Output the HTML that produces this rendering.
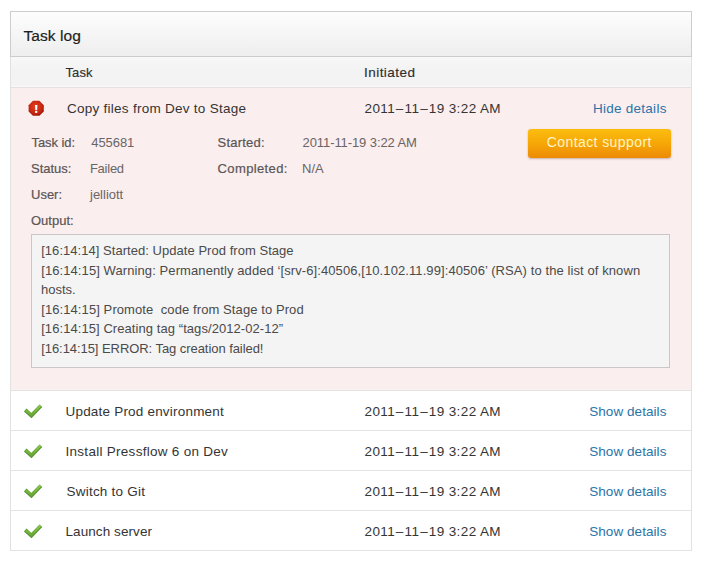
<!DOCTYPE html>
<html><head><meta charset="utf-8">
<style>
html,body{margin:0;padding:0;background:#fff;width:707px;height:571px;overflow:hidden;}
body{font-family:"Liberation Sans",sans-serif;position:relative;}
.a{position:absolute;white-space:nowrap;line-height:16px;}
#box{position:absolute;left:10px;top:11px;width:680px;height:538px;border:1px solid #e1e1e1;border-bottom-color:#e3e3e3;background:#fff;}
#hdr{position:absolute;left:10px;top:11px;width:680px;height:44px;background:linear-gradient(#fdfdfd,#eeeeee);border:1px solid #cdcdcd;}
#colh{position:absolute;left:11px;top:57px;width:680px;height:29px;background:linear-gradient(#f8f8f8,#f3f3f3 40%);border-bottom:1px solid #faf8f8;}
#colhb{position:absolute;left:11px;top:87px;width:680px;height:1px;background:#e5e0e0;}
#pink{position:absolute;left:11px;top:88px;width:680px;height:302px;background:#fbeeee;}
#pinkb{position:absolute;left:11px;top:390px;width:680px;height:1px;background:#e5e1e0;box-shadow:0 -1px 0 #f9f2f1;}
.rb{position:absolute;left:11px;width:680px;height:1px;background:#e3e3e3;}
#out{position:absolute;left:31px;top:234px;width:637px;height:132px;background:#f4f4f4;border:1px solid #cbc7c7;}
#btn{position:absolute;left:528px;top:129px;width:143px;height:29px;border-radius:3px;background:linear-gradient(#fbbd0e 0%,#f6a707 50%,#ec8a06 100%);box-shadow:0 1px 2px rgba(90,40,0,0.3);}
.dsh{margin:0 0.8px;}

</style></head><body>
<div id="box"></div>
<div id="hdr"></div>
<div id="colh"></div>
<div id="colhb"></div>
<div id="pink"></div>
<div id="pinkb"></div>
<svg style="position:absolute;left:28px;top:100px" width="17" height="17" viewBox="0 0 17 17">
<defs><radialGradient id="rg" cx="0.45" cy="0.4" r="0.62"><stop offset="0" stop-color="#e33f22"/><stop offset="0.7" stop-color="#c8260f"/><stop offset="1" stop-color="#9a160a"/></radialGradient></defs>
<polygon points="5.0,0.8 11.4,0.8 15.8,5.2 15.8,11.4 11.4,15.8 5.0,15.8 0.6,11.4 0.6,5.2" fill="url(#rg)"/>
<polygon points="7,5 9.4,5 9.1,10.2 7.3,10.2" fill="#fff"/>
<rect x="7.1" y="11" width="2.2" height="1.9" fill="#fff"/>
</svg>
<div id="btn"></div>
<div id="out"></div>
<div class="rb" style="top:430px"></div>
<div class="rb" style="top:470px"></div>
<div class="rb" style="top:510px"></div>
<svg style="position:absolute;left:20px;top:400px" width="28" height="24" viewBox="0 0 28 24"><defs><linearGradient id="cg1" gradientUnits="userSpaceOnUse" x1="0" y1="4" x2="0" y2="17"><stop offset="0" stop-color="#94cf4c"/><stop offset="1" stop-color="#62a834"/></linearGradient></defs><polyline points="5.2,10 11.4,15.6 20.9,5.7" fill="none" stroke="#5a942e" stroke-width="3.8"/><polyline points="5.8,10.2 11.4,15.1 20.4,5.8" fill="none" stroke="url(#cg1)" stroke-width="2"/></svg>
<svg style="position:absolute;left:20px;top:440px" width="28" height="24" viewBox="0 0 28 24"><defs><linearGradient id="cg2" gradientUnits="userSpaceOnUse" x1="0" y1="4" x2="0" y2="17"><stop offset="0" stop-color="#94cf4c"/><stop offset="1" stop-color="#62a834"/></linearGradient></defs><polyline points="5.2,10 11.4,15.6 20.9,5.7" fill="none" stroke="#5a942e" stroke-width="3.8"/><polyline points="5.8,10.2 11.4,15.1 20.4,5.8" fill="none" stroke="url(#cg2)" stroke-width="2"/></svg>
<svg style="position:absolute;left:20px;top:480px" width="28" height="24" viewBox="0 0 28 24"><defs><linearGradient id="cg3" gradientUnits="userSpaceOnUse" x1="0" y1="4" x2="0" y2="17"><stop offset="0" stop-color="#94cf4c"/><stop offset="1" stop-color="#62a834"/></linearGradient></defs><polyline points="5.2,10 11.4,15.6 20.9,5.7" fill="none" stroke="#5a942e" stroke-width="3.8"/><polyline points="5.8,10.2 11.4,15.1 20.4,5.8" fill="none" stroke="url(#cg3)" stroke-width="2"/></svg>
<svg style="position:absolute;left:20px;top:520px" width="28" height="24" viewBox="0 0 28 24"><defs><linearGradient id="cg4" gradientUnits="userSpaceOnUse" x1="0" y1="4" x2="0" y2="17"><stop offset="0" stop-color="#94cf4c"/><stop offset="1" stop-color="#62a834"/></linearGradient></defs><polyline points="5.2,10 11.4,15.6 20.9,5.7" fill="none" stroke="#5a942e" stroke-width="3.8"/><polyline points="5.8,10.2 11.4,15.1 20.4,5.8" fill="none" stroke="url(#cg4)" stroke-width="2"/></svg>
<div class="a" id="title" style="left:23.5px;top:27px;font-size:15.5px;color:#1e1e1e;letter-spacing:0.08px;line-height:18px;-webkit-text-stroke:0.2px #1e1e1e;">Task log</div>
<div class="a" id="ch1" style="left:65.5px;top:65px;font-size:13px;color:#2e2e2e;letter-spacing:0.1px;line-height:16px;-webkit-text-stroke:0.15px #2e2e2e;">Task</div>
<div class="a" id="ch2" style="left:364.0px;top:65px;font-size:13.5px;color:#2e2e2e;letter-spacing:0.46px;line-height:16px;-webkit-text-stroke:0.15px #2e2e2e;">Initiated</div>
<div class="a" id="r0t" style="left:66.9px;top:101px;font-size:13.5px;color:#343434;letter-spacing:0.27px;line-height:16px;">Copy files from Dev to Stage</div>
<div class="a" id="r0d" style="left:364.5px;top:101px;font-size:13.5px;color:#343434;letter-spacing:0.38px;line-height:16px;">2011<span class="dsh">–</span>11<span class="dsh">–</span>19 3:22 AM</div>
<div class="a" id="r0l" style="left:592.9px;top:101px;font-size:13.5px;color:#2a74a8;letter-spacing:0.27px;line-height:16px;">Hide details</div>
<div class="a" id="l1" style="left:31.5px;top:135px;font-size:13px;color:#5a5555;letter-spacing:-0.07px;line-height:16px;-webkit-text-stroke:0.2px #5a5555;">Task id:</div>
<div class="a" id="v1" style="left:91.3px;top:135px;font-size:13px;color:#6a6565;letter-spacing:-0.08px;line-height:16px;">455681</div>
<div class="a" id="l2" style="left:31px;top:161px;font-size:13px;color:#5a5555;letter-spacing:0px;line-height:16px;-webkit-text-stroke:0.2px #5a5555;">Status:</div>
<div class="a" id="v2" style="left:89.9px;top:161px;font-size:13px;color:#6a6565;letter-spacing:-0.24px;line-height:16px;">Failed</div>
<div class="a" id="l3" style="left:31px;top:187px;font-size:13px;color:#5a5555;letter-spacing:0px;line-height:16px;-webkit-text-stroke:0.2px #5a5555;">User:</div>
<div class="a" id="v3" style="left:90px;top:187px;font-size:13px;color:#6a6565;letter-spacing:0px;line-height:16px;">jelliott</div>
<div class="a" id="l4" style="left:31px;top:213px;font-size:13px;color:#5a5555;letter-spacing:0px;line-height:16px;-webkit-text-stroke:0.2px #5a5555;">Output:</div>
<div class="a" id="l5" style="left:217.6px;top:135px;font-size:13px;color:#5a5555;letter-spacing:0.21px;line-height:16px;-webkit-text-stroke:0.2px #5a5555;">Started:</div>
<div class="a" id="v5" style="left:302.6px;top:135px;font-size:13px;color:#6a6565;letter-spacing:-0.09px;line-height:16px;">2011-11-19 3:22 AM</div>
<div class="a" id="l6" style="left:217.6px;top:161px;font-size:13px;color:#5a5555;letter-spacing:0.37px;line-height:16px;-webkit-text-stroke:0.2px #5a5555;">Completed:</div>
<div class="a" id="v6" style="left:302px;top:161px;font-size:13px;color:#6a6565;letter-spacing:0px;line-height:16px;">N/A</div>
<div class="a" id="btnt" style="left:546.7px;top:134px;font-size:14px;color:#fff4c8;letter-spacing:0.42px;line-height:16px;">Contact support</div>
<div class="a" id="o1" style="left:41.2px;top:243px;font-size:13px;color:#4a4a4a;letter-spacing:0.04px;line-height:16px;">[16:14:14] Started: Update Prod from Stage</div>
<div class="a" id="o2" style="left:41.2px;top:263px;font-size:13px;color:#4a4a4a;letter-spacing:0.09px;line-height:16px;">[16:14:15] Warning: Permanently added ‘[srv-6]:40506,[10.102.11.99]:40506’ (RSA) to the list of known</div>
<div class="a" id="o3" style="left:41px;top:282px;font-size:13px;color:#4a4a4a;letter-spacing:0px;line-height:16px;">hosts.</div>
<div class="a" id="o4" style="left:41.2px;top:302px;font-size:13px;color:#4a4a4a;letter-spacing:0.09px;line-height:16px;">[16:14:15] Promote&nbsp; code from Stage to Prod</div>
<div class="a" id="o5" style="left:41.2px;top:321px;font-size:13px;color:#4a4a4a;letter-spacing:0.07px;line-height:16px;">[16:14:15] Creating tag “tags/2012-02-12”</div>
<div class="a" id="o6" style="left:41.2px;top:341px;font-size:13px;color:#4a4a4a;letter-spacing:-0.06px;line-height:16px;">[16:14:15] ERROR: Tag creation failed!</div>
<div class="a" id="r1t" style="left:65.5px;top:404px;font-size:13.5px;color:#343434;letter-spacing:0.2px;line-height:16px;">Update Prod environment</div>
<div class="a" id="r1d" style="left:364.5px;top:404px;font-size:13.5px;color:#343434;letter-spacing:0.38px;line-height:16px;">2011<span class="dsh">–</span>11<span class="dsh">–</span>19 3:22 AM</div>
<div class="a" id="r1l" style="left:589.2px;top:404px;font-size:13.5px;color:#2a74a8;letter-spacing:0.06px;line-height:16px;">Show details</div>
<div class="a" id="r2t" style="left:65.5px;top:444px;font-size:13.5px;color:#343434;letter-spacing:0.28px;line-height:16px;">Install Pressflow 6 on Dev</div>
<div class="a" id="r2d" style="left:364.5px;top:444px;font-size:13.5px;color:#343434;letter-spacing:0.38px;line-height:16px;">2011<span class="dsh">–</span>11<span class="dsh">–</span>19 3:22 AM</div>
<div class="a" id="r2l" style="left:589.2px;top:444px;font-size:13.5px;color:#2a74a8;letter-spacing:0.06px;line-height:16px;">Show details</div>
<div class="a" id="r3t" style="left:66.5px;top:484px;font-size:13.5px;color:#343434;letter-spacing:0.22px;line-height:16px;">Switch to Git</div>
<div class="a" id="r3d" style="left:364.5px;top:484px;font-size:13.5px;color:#343434;letter-spacing:0.38px;line-height:16px;">2011<span class="dsh">–</span>11<span class="dsh">–</span>19 3:22 AM</div>
<div class="a" id="r3l" style="left:589.2px;top:484px;font-size:13.5px;color:#2a74a8;letter-spacing:0.06px;line-height:16px;">Show details</div>
<div class="a" id="r4t" style="left:65.5px;top:524px;font-size:13.5px;color:#343434;letter-spacing:0.08px;line-height:16px;">Launch server</div>
<div class="a" id="r4d" style="left:364.5px;top:524px;font-size:13.5px;color:#343434;letter-spacing:0.38px;line-height:16px;">2011<span class="dsh">–</span>11<span class="dsh">–</span>19 3:22 AM</div>
<div class="a" id="r4l" style="left:589.2px;top:524px;font-size:13.5px;color:#2a74a8;letter-spacing:0.06px;line-height:16px;">Show details</div>

</body></html>
